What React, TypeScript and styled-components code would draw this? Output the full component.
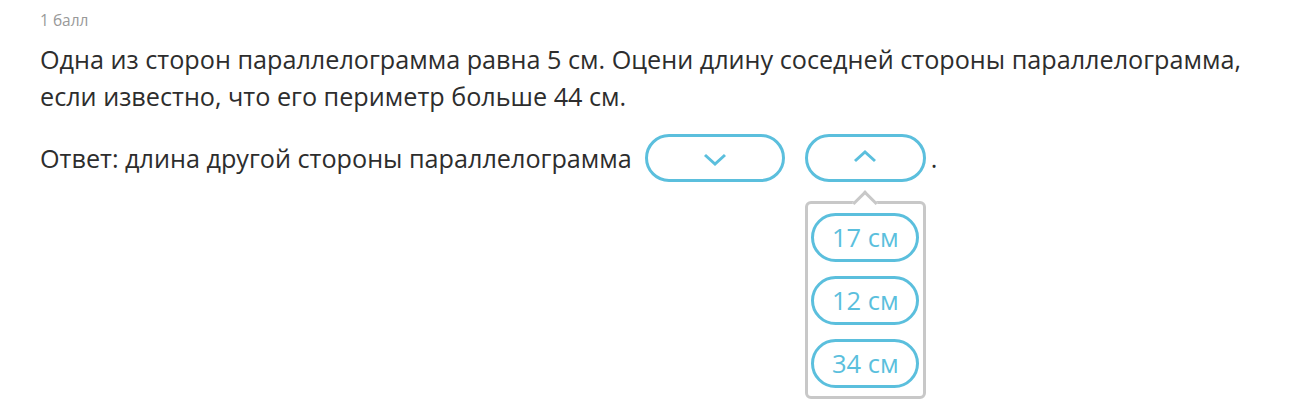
import { FC } from 'react';
import styled, { createGlobalStyle } from 'styled-components';

const GlobalStyle = createGlobalStyle({
  'html, body, #root': {
    height: '100%',
  },
  body: {
    margin: 0,
    background: '#fff',
    fontFamily: '"Open Sans", "Noto Sans", sans-serif',
    color: '#2d2d2d',
  },
});

const accent = '#5bbfdd';

const Page = styled.div({
  boxSizing: 'border-box',
  minHeight: '100%',
  padding: '10px 40px',
});

const Score = styled.div({
  fontSize: 15.5,
  lineHeight: '20px',
  color: '#999',
});

const Question = styled.p({
  margin: '11px 0 0',
  fontSize: 25.2,
  lineHeight: '37px',
});

const AnswerRow = styled.div({
  display: 'flex',
  alignItems: 'center',
  marginTop: 19,
  fontSize: 25.2,
  lineHeight: '37px',
});

const SelectWrap = styled.div({
  position: 'relative',
  marginLeft: 13,
  '& + &': {
    marginLeft: 20,
  },
});

const Select = styled.div<{ $width: number }>(({ $width }) => ({
  boxSizing: 'border-box',
  width: $width,
  height: 48,
  border: `3px solid ${accent}`,
  borderRadius: 24,
  display: 'flex',
  alignItems: 'center',
  justifyContent: 'center',
  background: '#fff',
}));

const Period = styled.span({
  marginLeft: 5,
});

const Dropdown = styled.div({
  position: 'absolute',
  top: 'calc(100% + 19px)',
  left: 0,
  zIndex: 2,
  boxSizing: 'border-box',
  width: 121,
  padding: '9px 0 8px',
  border: '3px solid #c8c8c8',
  borderRadius: 6,
  background: '#fff',
  display: 'flex',
  flexDirection: 'column',
  alignItems: 'center',
  gap: 14,
});

const Pointer = styled.div({
  position: 'absolute',
  top: -10,
  left: '50%',
  width: 15,
  height: 15,
  marginLeft: -9,
  background: '#fff',
  borderTop: '3px solid #c8c8c8',
  borderLeft: '3px solid #c8c8c8',
  transform: 'rotate(45deg)',
});

const Option = styled.div({
  position: 'relative',
  boxSizing: 'border-box',
  width: 108,
  height: 49,
  border: `3px solid ${accent}`,
  borderRadius: 25,
  display: 'flex',
  alignItems: 'center',
  justifyContent: 'center',
  color: accent,
  fontSize: 25.5,
});

const Chevron: FC<{ up?: boolean }> = ({ up }) => (
  <svg width="24" height="14" viewBox="0 0 24 14" style={{ marginTop: up ? -4 : 4 }}>
    <path
      d={up ? 'M2 12 L12 3 L22 12' : 'M2 2 L12 11 L22 2'}
      fill="none"
      stroke={accent}
      strokeWidth="3"
    />
  </svg>
);

const options = ['17 см', '12 см', '34 см'];

const App: FC = () => (
  <Page>
    <GlobalStyle />
    <Score>1 балл</Score>
    <Question>
      Одна из сторон параллелограмма равна 5 см. Оцени длину соседней стороны параллелограмма,
      <br />
      если известно, что его периметр больше 44 см.
    </Question>
    <AnswerRow>
      <span>Ответ: длина другой стороны параллелограмма</span>
      <SelectWrap>
        <Select $width={140}>
          <Chevron />
        </Select>
      </SelectWrap>
      <SelectWrap>
        <Select $width={121}>
          <Chevron up />
        </Select>
        <Dropdown>
          <Pointer />
          {options.map(o => (
            <Option key={o}>{o}</Option>
          ))}
        </Dropdown>
      </SelectWrap>
      <Period>.</Period>
    </AnswerRow>
  </Page>
);

export default App;
